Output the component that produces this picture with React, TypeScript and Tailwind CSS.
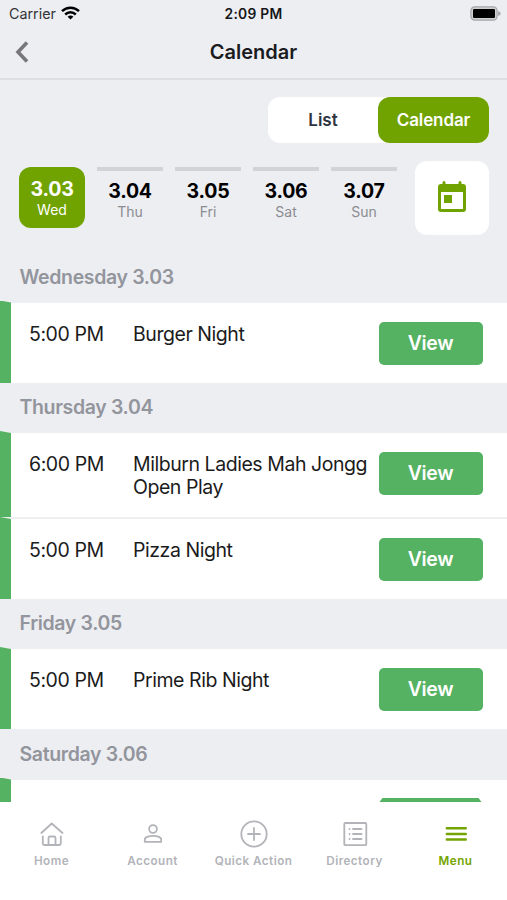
import type { ReactNode } from 'react';

type EventItem = { time: string; title: string };

function StatusBar() {
  return (
    <div className="flex h-[27px] items-center px-[9px]">
      <div className="flex flex-1 items-center gap-[5px]">
        <span className="text-[14.3px] leading-[27px] text-[#333436]">Carrier</span>
        <svg width="19" height="14" viewBox="0 0 19 14" fill="none" stroke="#000" strokeWidth="2.5" className="-mt-px">
          <path d="M1 5.2C5.8.6 13.2.6 18 5.2" />
          <path d="M4.2 8.5C7.2 5.6 11.8 5.6 14.8 8.5" />
          <path d="M9.5 13.6 6.6 10.7C8.2 9.2 10.8 9.2 12.4 10.7Z" fill="#000" stroke="none" />
        </svg>
      </div>
      <span className="pt-px text-[13.8px] font-semibold leading-[26px] tracking-[0.25px] text-[#151618]">2:09 PM</span>
      <div className="flex flex-1 justify-end">
        <svg width="31" height="15" viewBox="0 0 31 15" className="-mr-[3px] -mt-px">
          <rect x=".9" y=".9" width="26.2" height="13.2" rx="3.8" fill="#d0d0d2" stroke="#a4a5a7" strokeWidth="1.2" />
          <rect x="3" y="3" width="22" height="9" rx="1.2" fill="#000" />
          <path d="M28.2 5c1.6.5 2.4 1.4 2.4 2.5s-.8 2-2.4 2.5z" fill="#a4a5a7" />
        </svg>
      </div>
    </div>
  );
}

function DayTile({ date, day }: { date: string; day: string }) {
  return (
    <div className="flex h-[61px] w-[66px] flex-col items-center border-t-4 border-[#d2d3d6] pt-[9px]">
      <span className="text-[19.5px] font-bold leading-[22px] tracking-[-0.2px] text-black">{date}</span>
      <span className="text-[14px] leading-[19px] text-[#8b8c91]">{day}</span>
    </div>
  );
}

function SectionHeader({ children, className = 'h-[50px]' }: { children: ReactNode; className?: string }) {
  return (
    <div className={`flex shrink-0 items-center pl-[19.5px] text-[19.5px] font-semibold tracking-[-0.35px] text-[#93959d] ${className}`}>
      <span className="whitespace-nowrap">{children}</span>
    </div>
  );
}

function EventRow({ item, className }: { item: EventItem; className: string }) {
  return (
    <div className={`flex shrink-0 items-start bg-white ${className}`}>
      <div className="-mt-[2px] w-[11px] self-stretch bg-[#55b262] [clip-path:polygon(0_0,100%_2px,100%_100%,0_100%)]" />
      <div className="w-[122px] pl-[18px] pt-[20px] text-[19.5px] leading-[23px] tracking-[-0.43px] text-[#1b1b1c]">{item.time}</div>
      <div className="w-[245.5px] whitespace-pre-line pt-[20px] text-[19.5px] leading-[23px] tracking-[-0.45px] text-[#1b1b1c]">{item.title}</div>
      <button className="mt-[19px] h-[43px] w-[104px] shrink-0 rounded-[5px] bg-[#55b262] pt-px text-[19.5px] font-semibold tracking-[-0.3px] text-white">
        View
      </button>
    </div>
  );
}

function NavItem({ label, active = false, children }: { label: string; active?: boolean; children: ReactNode }) {
  return (
    <div className={`flex w-[101px] flex-col items-center ${active ? 'text-[#74a400]' : 'text-[#b2b4b9]'}`}>
      <svg width="30" height="30" viewBox="0 0 30 30" fill="none" stroke="currentColor" strokeWidth="1.8" strokeLinecap="round" strokeLinejoin="round">
        {children}
      </svg>
      <span className="mt-[4px] whitespace-nowrap text-[11.7px] font-semibold leading-[16px] tracking-[0.45px]">{label}</span>
    </div>
  );
}

export default function App() {
  return (
    <div className="flex h-[900px] w-[507px] flex-col overflow-hidden bg-[#edeef2] font-['Inter','Liberation_Sans',sans-serif]">
      <StatusBar />
      <header className="flex h-[53px] items-center border-b-2 border-[#dedfe2] px-[15px]">
        <svg width="14" height="22" viewBox="0 0 14 22" fill="none" stroke="#777779" strokeWidth="3.6" className="-mt-[2px]">
          <path d="M12 1.5 3 11l9 9.5" />
        </svg>
        <h1 className="flex-1 pb-px pr-[14px] text-center text-[20px] font-semibold text-[#1a1b1e]">Calendar</h1>
      </header>

      <div className="mr-[18px] mt-[17px] flex h-[46px] w-[221px] shrink-0 self-end rounded-[12px] bg-white text-[17px] font-semibold">
        <button className="w-[110px] pt-[2px] text-[#2e3340]">List</button>
        <button className="w-[111px] rounded-[12px] bg-[#71a300] pt-[2px] tracking-[-0.1px] text-white">Calendar</button>
      </div>

      <div className="mt-[18px] flex h-[74px] shrink-0 items-start pl-[19px]">
        <div className="mt-[6px] flex gap-[12px]">
          <div className="flex h-[61px] w-[66px] flex-col items-center rounded-[12px] bg-[#71a300] pt-[11px] text-white">
            <span className="text-[19.5px] font-bold leading-[22px] tracking-[-0.2px]">3.03</span>
            <span className="text-[14px] leading-[19px]">Wed</span>
          </div>
          <DayTile date="3.04" day="Thu" />
          <DayTile date="3.05" day="Fri" />
          <DayTile date="3.06" day="Sat" />
          <DayTile date="3.07" day="Sun" />
        </div>
        <button className="ml-[18px] flex h-[74px] w-[74px] justify-center rounded-[12px] bg-white pt-[19.5px]">
          <svg width="28" height="31" viewBox="0 0 28 31" fill="#71a300">
            <path fillRule="evenodd" d="M4.5 1.5Q4.5 0 6 0T7.500 1.500V3H20.500V1.500Q20.500 0 22 0T23.500 1.500V3H25Q28 3 28 6V28Q28 31 25 31H3Q0 31 0 28V6Q0 3 3 3H4.500ZM3 11V28H25V11Z" />
            <path d="M6 14h8v8H6z" />
          </svg>
        </button>
      </div>

      <main className="flex h-[567px] shrink-0 flex-col overflow-hidden">
        <SectionHeader className="mt-[17px] h-[50.5px]">Wednesday 3.03</SectionHeader>
        <EventRow className="h-[80.5px]" item={{ time: '5:00 PM', title: 'Burger Night' }} />
        <SectionHeader>Thursday 3.04</SectionHeader>
        <EventRow className="h-[84px]" item={{ time: '6:00 PM', title: 'Milburn Ladies Mah Jongg\nOpen Play' }} />
        <div className="h-[2px] shrink-0 bg-[#eeeff1]" />
        <EventRow className="h-[80px]" item={{ time: '5:00 PM', title: 'Pizza Night' }} />
        <SectionHeader>Friday 3.05</SectionHeader>
        <EventRow className="h-[80px]" item={{ time: '5:00 PM', title: 'Prime Rib Night' }} />
        <SectionHeader className="h-[50.5px]">Saturday 3.06</SectionHeader>
        <div className="flex h-[22.5px] shrink-0 items-end bg-white">
          <div className="-mt-[2px] w-[11px] self-stretch bg-[#55b262] [clip-path:polygon(0_0,100%_2px,100%_100%,0_100%)]" />
          <div className="ml-[367.5px] h-[4px] w-[104px] bg-[#55b262] [clip-path:polygon(4px_0,100px_0,103px_100%,1px_100%)]" />
        </div>
      </main>

      <nav className="flex h-[98px] shrink-0 justify-center bg-white pt-[17px]">
        <NavItem label="Home">
          <path d="M4.300 14 14.700 4.500 25.500 14M5.800 17.500v7q0 1.500 1.500 1.500h15q1.500 0 1.500-1.500v-7M11.500 26v-7q0-1.500 1.500-1.500h4q1.500 0 1.500 1.500v7" />
        </NavItem>
        <NavItem label="Account">
          <circle cx="15" cy="10" r="3.900" />
          <path d="M6.800 22.800v-2.200c0-2.800 5-3.800 8.200-3.800s8.200 1 8.200 3.800v2.200z" />
        </NavItem>
        <NavItem label="Quick Action">
          <circle cx="15" cy="15" r="12.700" />
          <path d="M15 9v12M9 15h12" />
        </NavItem>
        <NavItem label="Directory">
          <rect x="4.300" y="4" width="22" height="22.200" rx="1" />
          <path d="M9.500 10h.1M9.500 15h.1M9.500 20h.1M13 10h8.500M13 15h8.500M13 20h8.500" />
        </NavItem>
        <NavItem label="Menu" active>
          <path d="M5.800 9.300h19M5.800 15h19M5.800 20.500h19" strokeWidth="2.400" />
        </NavItem>
      </nav>
    </div>
  );
}
